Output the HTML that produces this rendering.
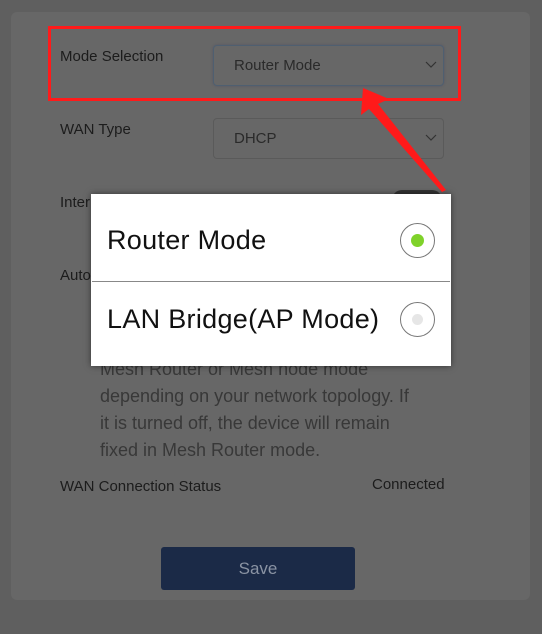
<!DOCTYPE html>
<html><head><style>
body{margin:0;width:542px;height:634px;background:#5f5f5f;font-family:"Liberation Sans",sans-serif;position:relative;overflow:hidden}
.card{position:absolute;left:11px;top:12px;width:519px;height:588px;background:#676767;border-radius:6px}
.lbl{position:absolute;left:60px;font-size:15px;color:#1c1c1c}
.sel{position:absolute;left:213px;width:231px;height:41px;border:1px solid #5a5a5a;border-radius:4px;box-sizing:border-box;font-size:15px;color:#2a2a2a;padding-left:20px;line-height:39px}
.sel svg{position:absolute;right:6px;top:15px}
.desc{position:absolute;left:100px;font-size:18px;color:#383838;line-height:27px}
</style></head><body>
<div class="card"></div>
<div class="lbl" style="top:48px">Mode Selection</div>
<div class="sel" style="top:45px;border-color:#4f5f70;box-shadow:0 0 2px #556">Router Mode<svg width="12" height="8"><path d="M1 1L6 6L11 1" fill="none" stroke="#333" stroke-width="1.2"/></svg></div>
<div class="lbl" style="top:121px">WAN Type</div>
<div class="sel" style="top:118px">DHCP<svg width="12" height="8"><path d="M1 1L6 6L11 1" fill="none" stroke="#333" stroke-width="1.2"/></svg></div>
<div class="lbl" style="top:194px">Inter</div>
<div class="lbl" style="top:267px">Auto</div>
<div style="position:absolute;left:392px;top:190px;width:50px;height:20px;border-radius:10px;background:#333"></div>
<div class="desc" style="top:356px">Mesh Router or Mesh node mode<br>depending on your network topology. If<br>it is turned off, the device will remain<br>fixed in Mesh Router mode.</div>
<div class="lbl" style="top:478px">WAN Connection Status</div>
<div class="lbl" style="top:476px;left:372px">Connected</div>
<div style="position:absolute;left:161px;top:547px;width:194px;height:43px;background:#1b2a47;border-radius:3px;color:#8a93a3;font-size:17px;text-align:center;line-height:43px">Save</div>
<div style="position:absolute;left:48px;top:26px;width:407px;height:69px;border:3px solid #ff1a1a"></div>
<div style="position:absolute;left:91px;top:194px;width:360px;height:172px;background:#fff;box-shadow:0 0 6px rgba(0,0,0,.5)">
<div style="position:absolute;left:16px;top:31px;font-size:27px;color:#111;letter-spacing:0.3px">Router Mode</div>
<div style="position:absolute;left:1px;right:1px;top:87px;height:1px;background:#888"></div>
<div style="position:absolute;left:16px;top:110px;font-size:27px;color:#111;letter-spacing:0.3px">LAN Bridge(AP Mode)</div>
<div style="position:absolute;left:309px;top:29px;width:33px;height:33px;border:1.5px solid #777;border-radius:50%"><div style="position:absolute;left:10px;top:10px;width:13px;height:13px;border-radius:50%;background:#7fd22a"></div></div>
<div style="position:absolute;left:309px;top:108px;width:33px;height:33px;border:1.5px solid #777;border-radius:50%"><div style="position:absolute;left:11px;top:11px;width:11px;height:11px;border-radius:50%;background:#e6e6e6"></div></div>
</div>
<svg style="position:absolute;left:0;top:0" width="542" height="634"><polygon points="363,88 389,99 378,104 446,190 442,192 369,109 361,115" fill="#ff1a1a"/></svg>
</body></html>
